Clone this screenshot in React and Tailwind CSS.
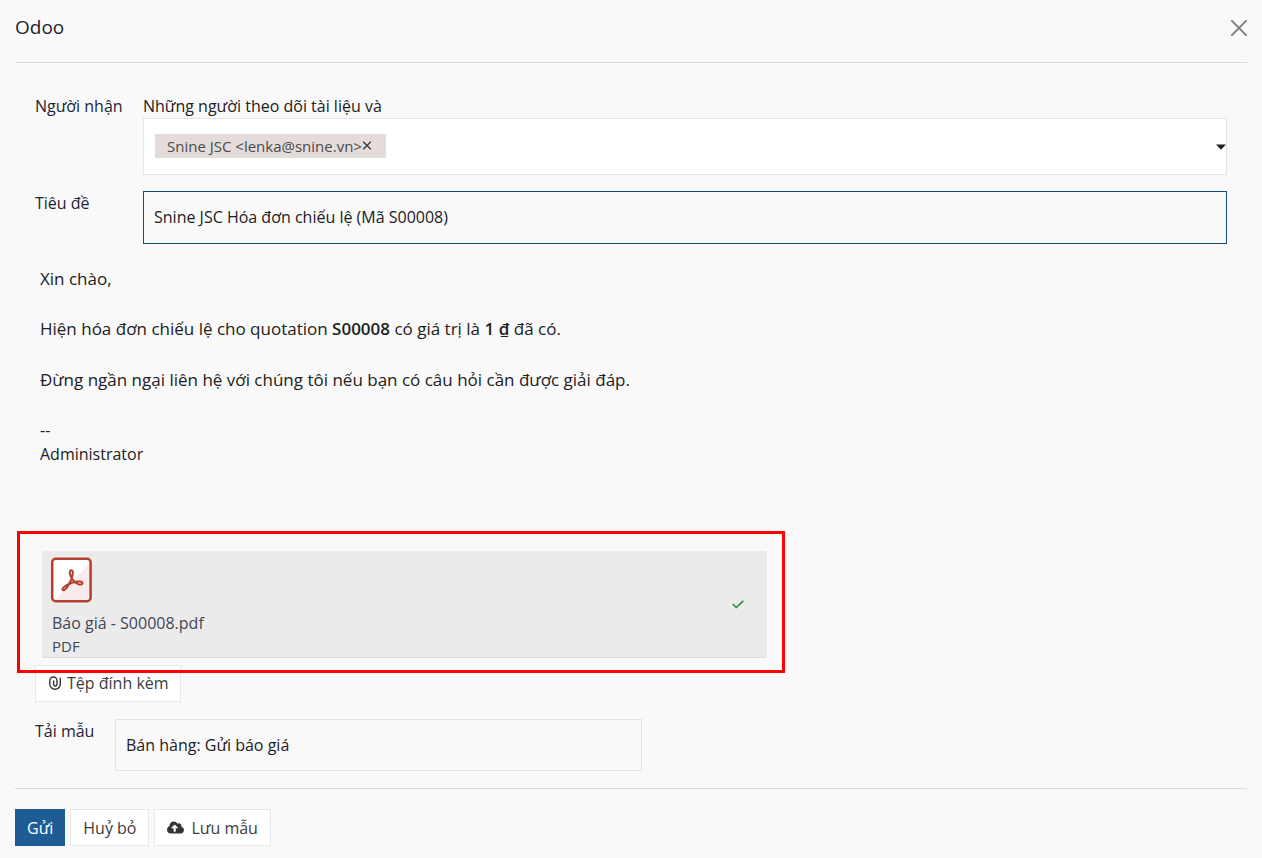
import React from "react";
import { FaCloudUploadAlt } from "react-icons/fa";

function CloseIcon() {
  return (
    <svg width="16" height="16" viewBox="0 0 16 16" fill="none" stroke="#7b7c7c" strokeWidth="1.9" strokeLinecap="round" aria-hidden="true">
      <path d="M0.9 0.9 15.1 15.1M15.1 0.9 0.9 15.1" />
    </svg>
  );
}

function PdfIcon() {
  return (
    <svg width="42" height="46" viewBox="0 0 42 46" fill="none" aria-hidden="true">
      <rect x="2" y="1.5" width="39" height="43" rx="3.5" fill="#fff" />
      <path d="M41 4.5V41a3.5 3.5 0 0 1-3.5 3.5H3.5Z" fill="#f7eceb" />
      <rect x="2.2" y="1.8" width="38.4" height="42.4" rx="3.5" stroke="#b5402f" strokeWidth="2.5" />
      <path
        d="M21.300 13.200C19.800 13.200 19.500 15 20 17.200C21 21.500 25 26 28.600 27.300C30.700 28 32.600 27.400 32.600 26C32.600 24.700 30.500 24.300 28 24.500C24 24.800 19.500 26.200 16.300 28.300C13.800 29.900 12 31.800 12.500 32.800C13.200 34 15.400 32.600 16.900 30.400C19.200 27 22.200 20.500 22.800 16.500C23.100 14.500 22.600 13.200 21.300 13.200Z"
        stroke="#b5402f"
        strokeWidth="2"
        strokeLinejoin="round"
      />
    </svg>
  );
}

function CheckIcon() {
  return (
    <svg width="12" height="9" viewBox="0 0 12 9" fill="none" stroke="#1f9230" strokeWidth="1.6" aria-hidden="true">
      <path d="M0.7 4 4.3 7.5 11.3 0.8" />
    </svg>
  );
}

function PaperclipIcon() {
  return (
    <svg width="12" height="14" viewBox="0 0 12 14" fill="none" stroke="#343434" strokeWidth="1.4" strokeLinecap="round" aria-hidden="true">
      <path d="M11.300 2.200v5.800a5.250 5.250 0 0 1-10.500 0V4.600a3.600 3.600 0 0 1 7.200 0v3.700a1.700 1.700 0 0 1-3.400 0V5" />
    </svg>
  );
}

const secondaryButton =
  "flex h-[37px] items-center border border-[#e7e8ec] bg-white text-base text-[#3c3c3c]";

export default function App() {
  return (
    <div className="min-h-screen bg-[#f9f9f9] px-[15px] pb-3 font-['Open_Sans','Noto_Sans',sans-serif] text-base leading-6 text-[#212121]">
      <header className="flex h-[63px] items-start justify-between border-b border-[#d9dadb] pt-3.5">
        <h1 className="text-[19px] leading-[26px] text-[#1d2433]">Odoo</h1>
        <button type="button" aria-label="Đóng" className="pt-1.5">
          <CloseIcon />
        </button>
      </header>

      <form onSubmit={(e) => e.preventDefault()}>
        <div className="px-5 pt-[31px]">
          <div className="flex">
            <label htmlFor="recipients" className="w-27 shrink-0 text-[#1d2433]">
              Người nhận
            </label>
            <div className="min-w-0 flex-1">
              <p>Những người theo dõi tài liệu và</p>
              <div className="flex h-[57px] items-center border border-[#e2e3ed] bg-white pl-[11px]">
                <span className="mb-0.5 flex h-6 shrink-0 items-center bg-[#e4dcdb] pr-3.5 pl-3 text-[15px] text-[#4a4a4a]">
                  Snine JSC &lt;lenka@snine.vn&gt;
                  <button type="button" aria-label="Xóa người nhận">
                    <svg width="10" height="9" viewBox="0 0 10 9" stroke="#3c3c3c" strokeWidth="1.3" aria-hidden="true">
                      <path d="M1.2 0.7 8.8 8.3M8.8 0.7 1.2 8.3" />
                    </svg>
                  </button>
                </span>
                <input id="recipients" type="text" className="h-full min-w-0 flex-1 bg-transparent px-2 outline-none" />
                <svg width="10" height="6" viewBox="0 0 10 6" fill="#212121" aria-hidden="true">
                  <path d="M0 0.5h10L5 5.8Z" />
                </svg>
              </div>
            </div>
          </div>

          <div className="mt-4 flex">
            <label htmlFor="subject" className="w-27 shrink-0 text-[#1d2433]">
              Tiêu đề
            </label>
            <input
              id="subject"
              type="text"
              defaultValue="Snine JSC Hóa đơn chiếu lệ (Mã S00008)"
              className="h-[53px] min-w-0 flex-1 border border-[#0f4c81] bg-transparent px-2.5 pb-0.5 outline-none"
            />
          </div>

          <div className="px-[5px] pt-[22px]">
            <div className="text-[17px] leading-[25px]">
              <p className="mb-[25px]">Xin chào,</p>
              <p className="mb-[26px]">
                Hiện hóa đơn chiếu lệ cho quotation <strong className="font-semibold">S00008</strong> có giá trị là{" "}
                <strong className="font-semibold">1 ₫</strong> đã có.
              </p>
              <p className="mb-[26px]">Đừng ngần ngại liên hệ với chúng tôi nếu bạn có câu hỏi cần được giải đáp.</p>
            </div>
            <p>--</p>
            <p>Administrator</p>
          </div>

          <div className="relative mt-[85px] ml-[7px] w-full max-w-[725px]">
            <div className="flex h-[107px] items-center justify-between rounded-[3px] border-b border-[#d9dadb] bg-[#ebebeb] pr-[23px] pl-2">
              <div className="h-full pt-1.5">
                <PdfIcon />
                <div className="pt-2 pl-0.5 text-[#3f4757]">
                  <a href="#attachment" className="block">
                    Báo giá - S00008.pdf
                  </a>
                  <p className="text-[15px] leading-[22px] font-medium">PDF</p>
                </div>
              </div>
              <CheckIcon />
            </div>
            <div className="pointer-events-none absolute -top-5 -right-[18px] -bottom-[15px] -left-[25px] z-10 border-3 border-[#ff0000]" />
          </div>

          <div className="mt-[7px] flex">
            <button type="button" className={secondaryButton + " gap-1.5 pr-[11px] pb-0.5 pl-[13px]"}>
              <PaperclipIcon />
              Tệp đính kèm
            </button>
          </div>

          <div className="mt-[17px] flex">
            <label htmlFor="template" className="w-20 shrink-0 text-[#1d2433]">
              Tải mẫu
            </label>
            <input
              id="template"
              type="text"
              defaultValue="Bán hàng: Gửi báo giá"
              className="h-[52px] w-full max-w-[527px] min-w-0 border border-[#e2e3ed] bg-transparent px-2.5 outline-none"
            />
          </div>
        </div>

        <footer className="mt-[17px] flex gap-[5px] border-t border-[#d9dadb] pt-5">
          <button type="submit" className="h-[37px] border border-[#1f5c96] bg-[#1f5c96] px-[11px] text-base text-white">
            Gửi
          </button>
          <button type="button" className={secondaryButton + " px-3"}>
            Huỷ bỏ
          </button>
          <button type="button" className={secondaryButton + " gap-[7px] px-3"}>
            <FaCloudUploadAlt size={17} color="#343434" aria-hidden="true" />
            Lưu mẫu
          </button>
        </footer>
      </form>
    </div>
  );
}
